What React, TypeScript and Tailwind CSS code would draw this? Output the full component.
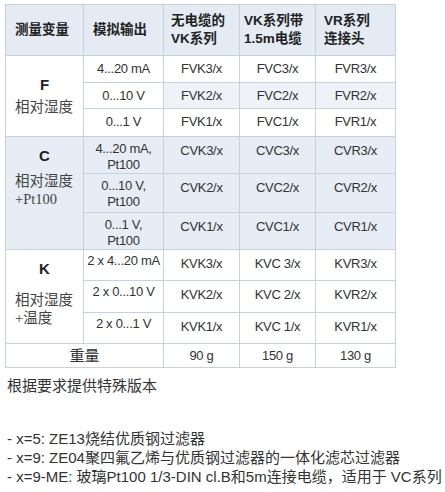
import React from 'react'

const sans = 'font-["Liberation_Sans","Noto_Sans_CJK_SC",sans-serif]'
const cjk = 'font-["Liberation_Serif","Noto_Sans_CJK_SC",serif]'

const cell = 'border border-[#c5d3e0] text-center align-top whitespace-nowrap'

type Row = { out: React.ReactNode; codes: string[]; shade?: boolean }

type Group = {
  letter: string
  label: React.ReactNode
  rows: Row[]
  heights: number[]
  bg: string
  pt: string
  mt: string
  outPt: string
  codePt: string
}

const groups: Group[] = [
  {
    letter: 'F',
    label: <>相对湿度</>,
    heights: [27, 26, 28],
    bg: 'bg-white',
    pt: 'pt-[20px]',
    mt: 'mt-[5px]',
    outPt: 'pt-[5px]',
    codePt: 'pt-[5px]',
    rows: [
      { out: '4...20 mA', codes: ['FVK3/x', 'FVC3/x', 'FVR3/x'] },
      { out: '0...10 V', codes: ['FVK2/x', 'FVC2/x', 'FVR2/x'], shade: true },
      { out: '0...1 V', codes: ['FVK1/x', 'FVC1/x', 'FVR1/x'] },
    ],
  },
  {
    letter: 'C',
    label: (
      <>
        相对湿度
        <br />
        +Pt100
      </>
    ),
    heights: [37, 39, 37],
    bg: 'bg-[#e6edf4]',
    pt: 'pt-[10px]',
    mt: 'mt-[8px]',
    outPt: 'pt-[4px]',
    codePt: 'pt-[6px]',
    rows: [
      { out: <>4...20 mA,<br />Pt100</>, codes: ['CVK3/x', 'CVC3/x', 'CVR3/x'] },
      { out: <>0...10 V,<br />Pt100</>, codes: ['CVK2/x', 'CVC2/x', 'CVR2/x'] },
      { out: <>0...1 V,<br />Pt100</>, codes: ['CVK1/x', 'CVC1/x', 'CVR1/x'] },
    ],
  },
  {
    letter: 'K',
    label: (
      <>
        相对湿度
        <br />
        +温度
      </>
    ),
    heights: [31, 32, 31],
    bg: 'bg-white',
    pt: 'pt-[10px]',
    mt: 'mt-[14px]',
    outPt: 'pt-[3px]',
    codePt: 'pt-[6px]',
    rows: [
      { out: '2 x 4...20 mA', codes: ['KVK3/x', 'KVC 3/x', 'KVR3/x'] },
      { out: '2 x 0...10 V', codes: ['KVK2/x', 'KVC 2/x', 'KVR2/x'] },
      { out: '2 x 0...1 V', codes: ['KVK1/x', 'KVC 1/x', 'KVR1/x'] },
    ],
  },
]

export default function App() {
  return (
    <div className={`bg-white w-[445px] h-[492px] overflow-hidden pt-[4px] pl-[5px] text-[#333] ${sans}`}>
      <table className="border-collapse table-fixed w-[390px] text-[13px] leading-[16px] tracking-[-0.3px]">
        <colgroup>
          <col className="w-[78px]" />
          <col className="w-[80px]" />
          <col className="w-[76px]" />
          <col className="w-[76px]" />
          <col className="w-[80px]" />
        </colgroup>
        <thead>
          <tr className="h-[51px] bg-[#e4ebf3] text-[#222] font-bold text-[13.5px] leading-[18px] tracking-normal">
            <th className="border border-[#c5d3e0] text-left align-middle pl-[9px]">测量变量</th>
            <th className="border border-[#c5d3e0] text-left align-middle pl-[9px]">模拟输出</th>
            <th className="border border-[#c5d3e0] text-left align-middle pl-[7px]">无电缆的<br />VK系列</th>
            <th className="border border-[#c5d3e0] text-left align-middle pl-[4px]">VK系列带<br />1.5m电缆</th>
            <th className="border border-[#c5d3e0] text-left align-middle pl-[8px]">VR系列<br />连接头</th>
          </tr>
        </thead>
        <tbody>
          {groups.map((g) =>
            g.rows.map((r, i) => (
              <tr key={g.letter + i} className={g.bg} style={{ height: g.heights[i] }}>
                {i === 0 && (
                  <td rowSpan={3} className={`border border-[#c5d3e0] align-top tracking-normal ${g.pt}`}>
                    <div className="text-center font-bold text-[15px] leading-[17px] text-[#222]">{g.letter}</div>
                    <div className={`${g.mt} pl-[9px] text-[14.5px] leading-[18px] text-[#444] ${cjk}`}>{g.label}</div>
                  </td>
                )}
                <td className={`${cell} ${g.outPt}`}>{r.out}</td>
                {r.codes.map((c) => (
                  <td key={c} className={`${cell} ${g.codePt} ${r.shade ? 'bg-[#eff3f8]' : ''}`}>
                    {c}
                  </td>
                ))}
              </tr>
            ))
          )}
          <tr className="h-[24px] bg-white">
            <td colSpan={2} className={`border border-[#c5d3e0] text-center align-middle text-[15px] tracking-normal ${cjk}`}>
              重量
            </td>
            <td className="border border-[#c5d3e0] text-center align-middle">90 g</td>
            <td className="border border-[#c5d3e0] text-center align-middle">150 g</td>
            <td className="border border-[#c5d3e0] text-center align-middle">130 g</td>
          </tr>
        </tbody>
      </table>
      <p className="mt-[9px] pl-[2px] text-[15px] leading-[18px]">根据要求提供特殊版本</p>
      <ul className="mt-[34px] pl-[2px] text-[15px] leading-[19px] whitespace-nowrap">
        <li>- x=5: ZE13烧结优质钢过滤器</li>
        <li>- x=9: ZE04聚四氟乙烯与优质钢过滤器的一体化滤芯过滤器</li>
        <li>- x=9-ME: 玻璃Pt100 1/3-DIN cl.B和5m连接电缆，适用于 VC系列</li>
      </ul>
    </div>
  )
}
